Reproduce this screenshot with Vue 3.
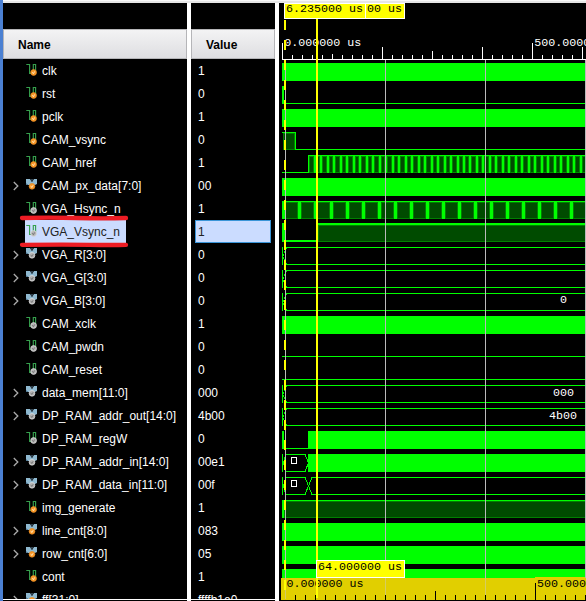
<script setup>
const signals = [
  { name: 'clk', value: '1', icon: 'wire', tone: 'orange' },
  { name: 'rst', value: '0', icon: 'wire', tone: 'orange' },
  { name: 'pclk', value: '1', icon: 'wire', tone: 'orange' },
  { name: 'CAM_vsync', value: '0', icon: 'wire', tone: 'orange' },
  { name: 'CAM_href', value: '1', icon: 'wire', tone: 'orange' },
  { name: 'CAM_px_data[7:0]', value: '00', icon: 'bus', tone: 'orange' },
  { name: 'VGA_Hsync_n', value: '1', icon: 'wire', tone: 'grey' },
  { name: 'VGA_Vsync_n', value: '1', icon: 'wire', tone: 'grey', selected: true },
  { name: 'VGA_R[3:0]', value: '0', icon: 'bus', tone: 'grey' },
  { name: 'VGA_G[3:0]', value: '0', icon: 'bus', tone: 'grey' },
  { name: 'VGA_B[3:0]', value: '0', icon: 'bus', tone: 'grey' },
  { name: 'CAM_xclk', value: '1', icon: 'wire', tone: 'grey' },
  { name: 'CAM_pwdn', value: '0', icon: 'wire', tone: 'grey' },
  { name: 'CAM_reset', value: '0', icon: 'wire', tone: 'grey' },
  { name: 'data_mem[11:0]', value: '000', icon: 'bus', tone: 'grey' },
  { name: 'DP_RAM_addr_out[14:0]', value: '4b00', icon: 'bus', tone: 'grey' },
  { name: 'DP_RAM_regW', value: '0', icon: 'wire', tone: 'grey' },
  { name: 'DP_RAM_addr_in[14:0]', value: '00e1', icon: 'bus', tone: 'grey' },
  { name: 'DP_RAM_data_in[11:0]', value: '00f', icon: 'bus', tone: 'grey' },
  { name: 'img_generate', value: '1', icon: 'wire', tone: 'orange' },
  { name: 'line_cnt[8:0]', value: '083', icon: 'bus', tone: 'orange' },
  { name: 'row_cnt[6:0]', value: '05', icon: 'bus', tone: 'orange' },
  { name: 'cont', value: '1', icon: 'wire', tone: 'orange' },
  { name: 'ff[31:0]', value: 'ffffb1e0', icon: 'bus', tone: 'orange' },
]

// top of the drawn trace for a row
const top = (row) => 63 + row * 23

const solidRows = [0, 2, 5, 11, 20, 21, 22]
const lowRows = [1, 12, 13]
const busRows = [8, 9, 10, 14, 15]
const gridLines = [285, 385, 485, 585]

// href toggles about every 6.5 px
const hrefBars = Array.from({ length: 42 }, (_, n) => Math.floor(314.4 + 6.483 * n))
const hrefCells = [308, ...hrefBars].map((x, i) => {
  const start = i === 0 ? 309 : x + 2
  const end = hrefBars[i] ?? 586
  return { x: start, w: end - start }
})

const hsyncCells = Array.from({ length: 19 }, (_, n) => {
  const x = 285 + n * 16
  return { x, w: 13 }
})

const ticks = Array.from({ length: 31 }, (_, n) => {
  let h = 4
  if (n % 25 === 0) h = 16
  else if (n % 10 === 0) h = 12
  else if (n === 15) h = 8
  else if (n % 5 === 0) h = 5
  return { x: 282 + n * 10, h }
})
const lowerTicks = Array.from({ length: 31 }, (_, n) => {
  let h = 5
  if (n === 25) h = 17
  else if (n === 15) h = 9
  return { x: 285 + n * 10, h }
})
const dashes = Array.from({ length: 29 }, (_, n) => 20 + n * 20)
</script>

<template>
  <div class="viewer">
    <aside class="edge"></aside>
    <div class="main">
      <div class="topline"></div>
      <div class="content">
        <section class="panel names">
          <header class="head">Name</header>
          <div class="rows">
            <div v-for="s in signals" :key="s.name" class="row">
              <span class="arrow">
                <svg v-if="s.icon === 'bus'" width="6" height="10" viewBox="0 0 6 10">
                  <path d="M.8 1 4.8 5 .8 9" fill="none" stroke="#aaa" stroke-width="1.3" />
                </svg>
              </span>
              <span class="label" :class="{ selected: s.selected }">
                <svg class="icon" width="13" height="13" viewBox="0 0 13 13">
                  <path
                    v-if="s.icon === 'wire'"
                    d="M1.3 1.5H4.6V10.5H8.3V1.5H10.6V8"
                    fill="none"
                    stroke="#36a04d"
                    stroke-width="1.15"
                  />
                  <template v-else>
                    <path d="M1 1H5L7 4L9 1H12V6L10 7H3L1 6Z" fill="#8fb9d0" />
                    <path d="M5 1H8.5L7 4Z" fill="#31424e" />
                    <path d="M1 5V7H3Z" fill="#527b96" />
                  </template>
                  <circle
                    :cx="s.icon === 'wire' ? 8.6 : 7"
                    :cy="s.icon === 'wire' ? 9.5 : 8.3"
                    r="2.9"
                    :fill="s.tone === 'orange' ? '#f9982a' : '#b4b4b4'"
                    :stroke="s.tone === 'orange' ? '#e58a20' : '#dedede'"
                    stroke-width=".7"
                  />
                  <path
                    :d="s.icon === 'wire' ? 'M7.4 9 8.4 10.8 9.8 8.3' : 'M5.8 7.8 6.8 9.6 8.2 7.1'"
                    fill="none"
                    :stroke="s.tone === 'orange' ? '#ffe6b8' : '#777'"
                    stroke-width=".9"
                  />
                </svg>
                <span>{{ s.name }}</span>
              </span>
            </div>
          </div>
        </section>
        <div class="divider"></div>
        <section class="panel values">
          <header class="head">Value</header>
          <div class="rows">
            <div v-for="s in signals" :key="s.name" class="value" :class="{ selected: s.selected }">
              {{ s.value }}
            </div>
          </div>
        </section>
        <div class="divider"></div>
        <svg class="wave" width="307" height="598" viewBox="279 3 307 598" shape-rendering="crispEdges">
          <rect x="279" y="3" width="307" height="598" fill="#000" />

          <!-- time axis -->
          <g fill="#fff">
            <rect x="282" y="59" width="304" height="1" />
            <rect v-for="t in ticks" :key="t.x" :x="t.x" :y="59 - t.h" width="1" :height="t.h" />
          </g>

          <!-- traces -->
          <g fill="#0f0">
            <rect v-for="r in solidRows" :key="r" x="282" :y="top(r)" width="303" height="18" />
            <rect v-for="r in lowRows" :key="r" x="282" :y="top(r) + 17" width="303" height="1" />
            <rect x="282" :y="top(1)" width="2" height="18" />
          </g>

          <g v-for="r in busRows" :key="r" fill="#0f0">
            <rect x="282" :y="top(r)" width="1" height="18" />
            <rect x="286" :y="top(r)" width="299" height="1" />
            <rect x="286" :y="top(r) + 17" width="299" height="1" />
            <rect x="285" :y="top(r) + 1" width="2" height="1" />
            <rect x="284" :y="top(r) + 4" width="1" height="2" />
            <rect x="283" :y="top(r) + 7" width="1" height="2" />
            <rect x="283" :y="top(r) + 10" width="1" height="2" />
            <rect x="284" :y="top(r) + 12" width="1" height="2" />
            <rect x="285" :y="top(r) + 16" width="2" height="1" />
          </g>

          <!-- CAM_vsync -->
          <rect x="283" y="133" width="12" height="17" fill="#008000" />
          <rect x="284" y="134" width="10" height="15" fill="#004b00" />
          <path d="M282 132.5H295.5V149.5H585" fill="none" stroke="#0f0" />

          <!-- CAM_href -->
          <path d="M282 172.5H308.5V155" fill="none" stroke="#0f0" />
          <rect x="308" y="155" width="277" height="18" fill="#0f0" />
          <g v-for="c in hrefCells" :key="c.x">
            <rect :x="c.x" y="156" :width="c.w" height="17" fill="#008800" />
            <rect :x="c.x + 1" y="157" :width="Math.max(c.w - 2, 0)" height="15" fill="#004b00" />
          </g>

          <!-- VGA_Hsync_n -->
          <rect x="282" y="201" width="303" height="18" fill="#0f0" />
          <g v-for="c in hsyncCells" :key="c.x">
            <rect :x="c.x" y="202" :width="c.w" height="17" fill="#008000" />
            <rect :x="c.x + 1" y="203" :width="c.w - 2" height="15" fill="#004b00" />
          </g>

          <!-- VGA_Vsync_n -->
          <g fill="#0f0">
            <rect x="282" y="223" width="3" height="19" />
            <rect x="282" y="240" width="36" height="2" />
            <rect x="317" y="223" width="268" height="19" />
          </g>
          <rect x="318" y="225" width="267" height="17" fill="#008000" />
          <rect x="319" y="226" width="266" height="15" fill="#004b00" />

          <!-- DP_RAM_regW, addr_in, data_in -->
          <g fill="#0f0">
            <rect x="282" y="431" width="2" height="18" />
            <rect x="282" y="448" width="27" height="1" />
            <rect x="308" y="431" width="277" height="18" />
            <rect x="308" y="454" width="277" height="18" />
            <rect x="282" y="454" width="1" height="18" />
            <rect x="282" y="477" width="1" height="18" />
            <rect x="283" y="461" width="1" height="4" />
            <rect x="283" y="484" width="1" height="4" />
          </g>
          <g fill="none" stroke="#0f0">
            <path d="M284 459.5 286 454.5H305L308.5 463 305 471.5H286L284 467" />
            <path d="M284 482.5 286 477.5H305L312 494.5H585" />
            <path d="M284 490 286 494.5H305L312 477.5H585" />
          </g>

          <!-- img_generate -->
          <rect x="282" y="500" width="303" height="18" fill="#0f0" />
          <rect x="284" y="501" width="301" height="17" fill="#008000" />
          <rect x="285" y="502" width="300" height="15" fill="#004b00" />

          <!-- lower ruler -->
          <rect x="281" y="578" width="305" height="22" fill="#e1cf00" />
          <rect x="535" y="577" width="51" height="2" fill="#e1cf00" />

          <rect v-for="g in gridLines" :key="g" :x="g" y="60" width="1" height="518" fill="#bababa" />
          <g fill="#d6cd60">
            <rect x="285" y="578" width="1" height="21" />
            <rect x="385" y="578" width="1" height="21" />
            <rect x="485" y="578" width="1" height="21" />
          </g>
          <g fill="#000">
            <rect v-for="t in lowerTicks.slice(1)" :key="t.x" :x="t.x" :y="600 - t.h" width="1" :height="t.h" />
            <rect x="281" y="600" width="305" height="1" />
          </g>

          <!-- values inside the traces -->
          <g class="mono" fill="#fff">
            <text x="560" y="303">0</text>
            <text x="553" y="395.5">000</text>
            <text x="549" y="418.5">4b00</text>
          </g>
          <rect x="291.5" y="457.5" width="5" height="6" fill="none" stroke="#fff" />
          <rect x="291.5" y="480.5" width="5" height="6" fill="none" stroke="#fff" />

          <g class="mono">
            <text x="284.3" y="46" fill="#fff">0.000000 us</text>
            <text x="534.3" y="46" fill="#fff">500.000000 us</text>
            <text x="286.5" y="587" fill="#000">0.000000 us</text>
            <text x="537" y="587" fill="#000">500.000000 us</text>
          </g>

          <!-- markers -->
          <rect x="316" y="19" width="2" height="579" fill="#ff0" />
          <rect v-for="y in dashes" :key="y" x="284" :y="y" width="2" height="10" fill="#ff0" />

          <rect x="284.5" y="3.5" width="120" height="15" fill="#ff0" stroke="#fff" />
          <rect x="365" y="4" width="1" height="14" fill="#fff" />
          <rect x="316.5" y="560.5" width="88" height="17" fill="#ff0" stroke="#fff" />
          <g class="mono" fill="#000">
            <text x="286" y="12">6.235000 us</text>
            <text x="367" y="12">00 us</text>
            <text x="318" y="570">64.000000 us</text>
          </g>
        </svg>
      </div>
    </div>
    <svg class="marks" width="112" height="34" viewBox="0 0 112 34">
      <path d="M4 3Q30 2.4 58 3T108 3" />
      <path d="M4 29.8Q50 29.4 72 29.8T108 29.8" />
    </svg>
  </div>
</template>

<style>
body {
  margin: 0;
  overflow: hidden;
}
</style>

<style scoped>
.viewer {
  position: relative;
  display: flex;
  width: 586px;
  height: 601px;
  overflow: hidden;
  background: #000;
  font: 12px/25px "Liberation Sans", Arial, sans-serif;
}
.edge {
  flex: none;
  width: 3px;
  background: #4b80d2;
}
.main {
  flex: 1;
  min-width: 0;
}
.topline {
  height: 2px;
  border-top: 1px solid #f8f8f8;
  background: #e6e6e6;
}
.content {
  display: flex;
  height: 598px;
}
.panel {
  display: flex;
  flex-direction: column;
  flex: none;
  box-sizing: border-box;
  height: 597px;
  padding-top: 26px;
  border-bottom: 1px solid #fff;
  background: #000;
  color: #fff;
}
.names {
  width: 184px;
}
.values {
  width: 84px;
}
.head {
  flex: none;
  box-sizing: border-box;
  height: 30px;
  padding-left: 14px;
  border: 1px solid #b5b5b8;
  background: linear-gradient(#f3f3f4, #dedee1);
  color: #000;
  font-weight: bold;
  line-height: 30px;
}
.rows {
  flex: 1;
  min-height: 0;
  overflow: hidden;
}
.row {
  display: flex;
  height: 23px;
}
.arrow {
  display: flex;
  align-items: center;
  width: 12px;
  padding: 1px 0 0 10px;
  height: 22px;
}
.label {
  display: flex;
  gap: 4px;
  white-space: nowrap;
}
.label.selected {
  padding-right: 6px;
  background: #cbdcff;
  color: #222;
}
.icon {
  margin-top: 4px;
}
.value {
  box-sizing: border-box;
  height: 23px;
  margin: 0 4px;
  padding-left: 3px;
}
.value.selected {
  padding-left: 2px;
  border: 1px solid #3a95d8;
  background: #cbdcff;
  color: #222;
  line-height: 23px;
}
.divider {
  flex: none;
  width: 4px;
  background: #fff;
}
.wave {
  display: block;
  flex: none;
}
.mono {
  font-family: "Liberation Mono", "Courier New", monospace;
  font-size: 11.67px;
  white-space: pre;
}
.marks {
  position: absolute;
  left: 18px;
  top: 215px;
  fill: none;
  stroke: #ed1c24;
  stroke-width: 4.3;
  stroke-linecap: round;
}
</style>
